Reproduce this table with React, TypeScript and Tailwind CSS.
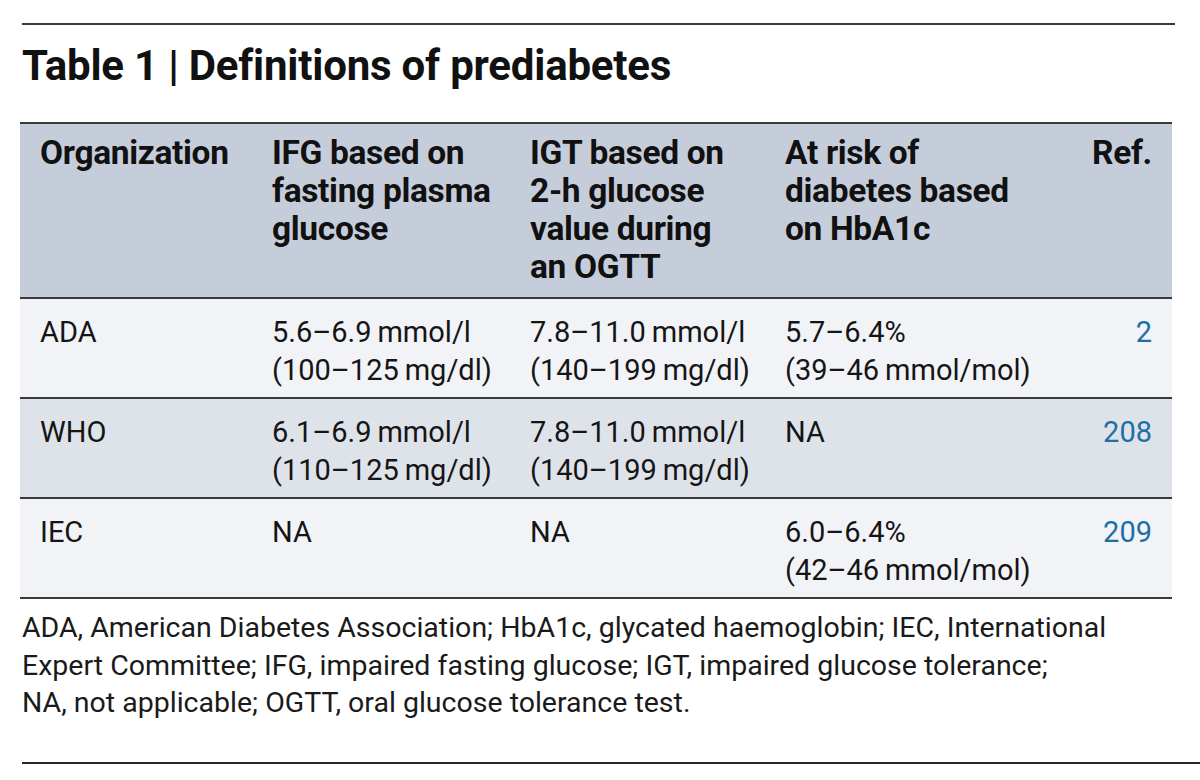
import React from "react";

const ff = { fontFamily: "Roboto, 'Liberation Sans', sans-serif" };

type Row = { org: string; ifg: string[]; igt: string[]; risk: string[]; ref: string; bg: string };

const T = "\u2009";
const rows: Row[] = [
  {
    org: "ADA",
    ifg: [`5.6–6.9${T}mmol/l`, `(100–125${T}mg/dl)`],
    igt: [`7.8–11.0${T}mmol/l`, `(140–199${T}mg/dl)`],
    risk: ["5.7–6.4%", `(39–46${T}mmol/mol)`],
    ref: "2",
    bg: "bg-[#f1f3f7]",
  },
  {
    org: "WHO",
    ifg: [`6.1–6.9${T}mmol/l`, `(110–125${T}mg/dl)`],
    igt: [`7.8–11.0${T}mmol/l`, `(140–199${T}mg/dl)`],
    risk: ["NA"],
    ref: "208",
    bg: "bg-[#dee3ea]",
  },
  {
    org: "IEC",
    ifg: ["NA"],
    igt: ["NA"],
    risk: ["6.0–6.4%", `(42–46${T}mmol/mol)`],
    ref: "209",
    bg: "bg-[#f1f3f7]",
  },
];

function Lines({ l }: { l: string[] }) {
  return (
    <div>
      {l.map((s, i) => (
        <div key={i} className="whitespace-nowrap">
          {s}
        </div>
      ))}
    </div>
  );
}

export default function App() {
  return (
    <div className="w-[1200px] h-[780px] bg-white text-[#111] overflow-hidden" style={ff}>
      <div className="pt-[23px]">
        <div className="ml-[22px] mr-[25px] h-[2px] bg-[#3a3a3a]" />
        <h1 className="ml-[22px] mt-[18px] text-[42px] leading-[46px] font-bold tracking-[-0.005em] text-[#111]">
          Table 1 | Definitions of prediabetes
        </h1>
        <div className="ml-[20px] mr-[28px] mt-[33px]">
          <div className="border-t-2 border-b-2 border-[#3a3a3a] bg-[#c6cdda] grid grid-cols-[232px_258px_255px_1fr_auto] px-[20px] pt-[10px] pb-[11px] text-[33.5px] leading-[38px] font-bold tracking-[-0.01em]">
            <div className="whitespace-nowrap">Organization</div>
            <div className="whitespace-nowrap">
              IFG based on
              <br />
              fasting plasma
              <br />
              glucose
            </div>
            <div className="whitespace-nowrap">
              IGT based on
              <br />
              2-h glucose
              <br />
              value during
              <br />
              an OGTT
            </div>
            <div className="whitespace-nowrap">
              At risk of
              <br />
              diabetes based
              <br />
              on HbA1c
            </div>
            <div className="text-right">Ref.</div>
          </div>
          {rows.map((r) => (
            <div
              key={r.org}
              className={`${r.bg} border-b-2 border-[#3a3a3a] grid grid-cols-[232px_258px_255px_1fr_auto] px-[20px] pt-[14px] pb-[8px] h-[100px] text-[29px] leading-[38px] text-[#151515]`}
            >
              <div>{r.org}</div>
              <Lines l={r.ifg} />
              <Lines l={r.igt} />
              <Lines l={r.risk} />
              <div className="text-right text-[#1e6fa6]">{r.ref}</div>
            </div>
          ))}
        </div>
        <div className="ml-[22px] mt-[10px] text-[28.5px] leading-[37.5px] text-[#1a1a1a]">
          <div className="whitespace-nowrap">ADA, American Diabetes Association; HbA1c, glycated haemoglobin; IEC, International</div>
          <div className="whitespace-nowrap">Expert Committee; IFG, impaired fasting glucose; IGT, impaired glucose tolerance;</div>
          <div className="whitespace-nowrap">NA, not applicable; OGTT, oral glucose tolerance test.</div>
        </div>
        <div className="ml-[22px] mt-[40px] h-[2px] bg-[#2a2a2a]" />
      </div>
    </div>
  );
}
